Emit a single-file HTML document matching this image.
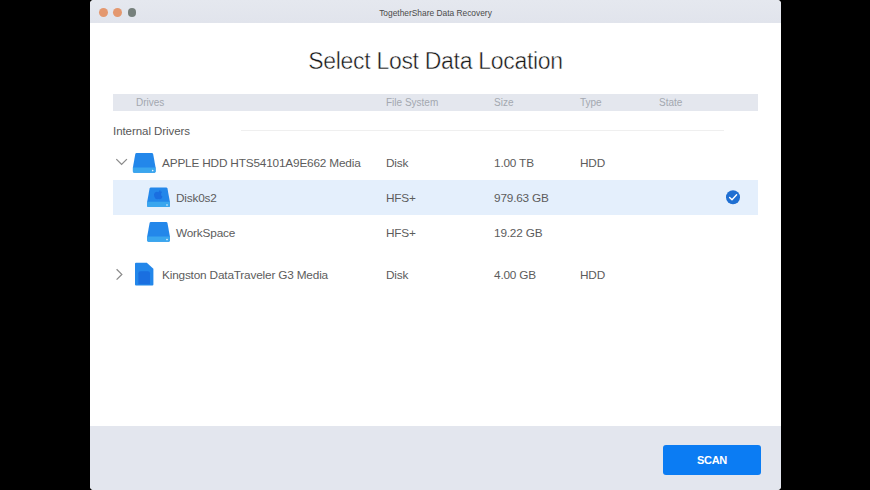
<!DOCTYPE html>
<html><head><meta charset="utf-8">
<style>
html,body{margin:0;padding:0;}
body{width:870px;height:490px;background:#000;position:relative;overflow:hidden;font-family:"Liberation Sans",sans-serif;}
#win{position:absolute;left:90px;top:0;width:691px;height:490px;background:#fff;border-radius:4px;overflow:hidden;}
#tb{position:absolute;left:0;top:0;width:100%;height:23px;background:linear-gradient(#e5e8ef,#e1e4ec);}
.tl{position:absolute;top:7.9px;width:9px;height:9px;border-radius:50%;}
#ttl{position:absolute;left:0;width:100%;top:7.5px;text-align:center;font-size:8.4px;color:#4a4a4a;line-height:10px;}
#h1{position:absolute;left:0;width:100%;top:44px;text-align:center;font-size:23px;color:#161616;line-height:34px;white-space:nowrap;letter-spacing:-0.3px;-webkit-text-stroke:0.45px #fff;}
#hdr{position:absolute;left:23px;top:94px;width:645px;height:17px;background:#e4e7ee;}
.ht{position:absolute;top:97px;font-size:10px;line-height:12px;color:#a3a7b0;white-space:nowrap;}
.t{position:absolute;font-size:11.8px;line-height:14px;color:#5c5c5c;white-space:nowrap;letter-spacing:-0.18px;}
#sel{position:absolute;left:23px;top:180px;width:645px;height:35px;background:#e4effc;}
#ft{position:absolute;left:0;top:426px;width:100%;height:64px;background:#e3e6ee;}
#btn{position:absolute;left:573px;top:445px;width:98px;height:30px;background:#0b7cf3;border-radius:3px;color:#fff;font-weight:bold;font-size:11px;line-height:31px;text-align:center;letter-spacing:-0.3px;}
svg{position:absolute;overflow:visible;}
</style></head><body>
<div id="win">
<div id="tb"></div>
<div class="tl" style="left:8.7px;background:#e4986f"></div>
<div class="tl" style="left:22.9px;background:#e4986f"></div>
<div class="tl" style="left:37.7px;top:8.1px;width:8.6px;height:8.6px;background:#76807c"></div>
<div id="ttl">TogetherShare Data Recovery</div>
<div id="h1">Select Lost Data Location</div>
<div id="hdr"></div>
<div class="ht" style="left:46px">Drives</div>
<div class="ht" style="left:296px">File System</div>
<div class="ht" style="left:404px">Size</div>
<div class="ht" style="left:490px">Type</div>
<div class="ht" style="left:569px">State</div>
<div class="t" style="left:23px;top:124px;font-size:11.5px;color:#585858;letter-spacing:-0.06px">Internal Drivers</div>
<div style="position:absolute;left:151px;top:130px;width:483px;height:1px;background:#efefef"></div>
<div id="sel"></div>

<div class="t" style="left:72px;top:156px">APPLE HDD HTS54101A9E662 Media</div>
<div class="t" style="left:296px;top:156px">Disk</div>
<div class="t" style="left:404px;top:156px">1.00 TB</div>
<div class="t" style="left:490px;top:156px">HDD</div>

<div class="t" style="left:86px;top:191px">Disk0s2</div>
<div class="t" style="left:296px;top:191px">HFS+</div>
<div class="t" style="left:404px;top:191px">979.63 GB</div>

<div class="t" style="left:86px;top:226px">WorkSpace</div>
<div class="t" style="left:296px;top:226px">HFS+</div>
<div class="t" style="left:404px;top:226px">19.22 GB</div>

<div class="t" style="left:72px;top:268px">Kingston DataTraveler G3 Media</div>
<div class="t" style="left:296px;top:268px">Disk</div>
<div class="t" style="left:404px;top:268px">4.00 GB</div>
<div class="t" style="left:490px;top:268px">HDD</div>


<!-- icons -->
<svg style="left:0;top:0" width="691" height="490" viewBox="0 0 691 490">
<defs>
<g id="drv">
<path d="M3.6 0 H19 Q20 0 20.25 1 L22.7 14.4 V18.6 Q22.7 19.7 21.6 19.7 H1.1 Q0 19.7 0 18.6 V14.4 L2.4 1 Q2.6 0 3.6 0 Z" fill="#2387ea"/>
<path d="M0 14.4 H22.7 V18.6 Q22.7 19.7 21.6 19.7 H1.1 Q0 19.7 0 18.6 Z" fill="#3aa6ee"/>
<circle cx="19.8" cy="17.6" r="0.8" fill="#e8f4ff"/>
</g>
</defs>
<!-- chevron down -->
<path d="M26.3 159.1 L31.6 164.4 L36.9 159.1" fill="none" stroke="#8c8c8c" stroke-width="1.3"/>
<!-- chevron right -->
<path d="M26.6 269.2 L31.8 274.4 L26.6 279.6" fill="none" stroke="#8c8c8c" stroke-width="1.3"/>
<use href="#drv" x="42.9" y="153"/>
<use href="#drv" x="57.2" y="187.4"/>
<use href="#drv" x="57.2" y="222"/>
<!-- apple on disk0s2 -->
<g transform="translate(68.3 195) scale(1.2) translate(-66.6 -196.3)">
<path d="M68.5 192.2 q-1.6 0.3 -1.7 1.9 q-1.6 -0.9 -3 0.2 q-1.3 1.3 -0.5 3.4 q0.9 2.2 2.3 2.1 q1.1 -0.5 2.2 0 q1.4 0.1 2.3 -2.1 q-1.4 -0.7 -1.2 -2.2 q0.1 -1 1 -1.6 q-1 -1 -2.3 -0.7 q0.9 -0.3 0.9 -1 z" fill="#1a6ee0"/>
</g>
<!-- SD card -->
<path d="M46 262.8 H56.8 L63.4 268.8 V284.5 Q63.4 285.5 62.4 285.5 H46 Q45 285.5 45 284.5 V263.8 Q45 262.8 46 262.8 Z" fill="#2387ea"/>
<path d="M48.4 284.2 V273.2 Q48.4 271.2 50.4 271.2 H58 Q60 271.2 60 273.2 V284.2 Z" fill="#1a6fe0"/>
<!-- check -->
<circle cx="643" cy="197.3" r="7" fill="#1f6fd2"/>
<path d="M639.6 197.4 L642 199.8 L646.6 194.8" fill="none" stroke="#fff" stroke-width="1.4" stroke-linecap="round" stroke-linejoin="round"/>
</svg>
<div id="ft"></div>
<div id="btn">SCAN</div>
</div>
</body></html>
